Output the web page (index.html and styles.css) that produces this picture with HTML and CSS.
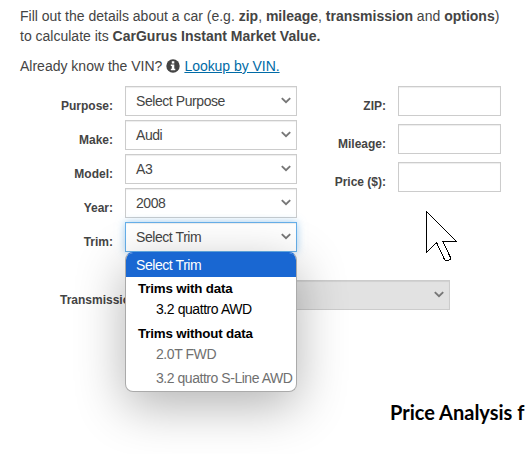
FILE: index.html
```html
<!DOCTYPE html>
<html lang="en">
<head>
<meta charset="utf-8">
<title>Instant Market Value</title>
<link rel="stylesheet" href="styles.css">
</head>
<body>
<svg class="defs" width="0" height="0"><symbol id="chevron" viewBox="0 0 10 7"><path d="M.8 1.1 5 5.1 9.2 1.1" fill="none" stroke="#777" stroke-width="1.9"/></symbol></svg>
<main class="page">
  <p class="intro"><span class="line first">Fill out the details about a car (e.g. <b>zip</b>, <b>mileage</b>, <b>transmission</b> and <b>options</b>)</span><br><span class="line second">to calculate its <b>CarGurus Instant Market Value.</b></span></p>
  <p class="vin"><span class="question">Already know the VIN?</span><svg class="info" viewBox="0 0 14 14"><circle cx="7" cy="7" r="6.7" fill="#444"/><path d="M5.8 2.3h2.5v2.1H5.8zM4.8 5.5h3.5v4.2h1v1.6H4.8V9.7h1V7h-1z" fill="#fff"/></svg><a href="#">Lookup by VIN.</a></p>
  <form class="form">
    <div class="column">
      <div class="row"><label>Purpose:</label><div class="select"><span>Select Purpose</span><svg class="chevron"><use href="#chevron"/></svg></div></div>
      <div class="row"><label>Make:</label><div class="select"><span>Audi</span><svg class="chevron"><use href="#chevron"/></svg></div></div>
      <div class="row"><label>Model:</label><div class="select"><span>A3</span><svg class="chevron"><use href="#chevron"/></svg></div></div>
      <div class="row"><label>Year:</label><div class="select"><span>2008</span><svg class="chevron"><use href="#chevron"/></svg></div></div>
      <div class="row"><label>Trim:</label><div class="select focus"><span>Select Trim</span><svg class="chevron"><use href="#chevron"/></svg>
        <div class="menu">
          <div class="option selected">Select Trim</div>
          <div class="group">Trims with data</div>
          <div class="option nested available">3.2 quattro AWD</div>
          <div class="group second">Trims without data</div>
          <div class="option nested muted">2.0T FWD</div>
          <div class="option nested muted last">3.2 quattro S-Line AWD</div>
        </div>
      </div></div>
    </div>
    <div class="column inputs">
      <div class="row"><label>ZIP:</label><input type="text"></div>
      <div class="row"><label>Mileage:</label><input type="text"></div>
      <div class="row"><label>Price ($):</label><input type="text"></div>
    </div>
  </form>
  <div class="row transmission"><label>Transmission:</label><div class="select disabled"><svg class="chevron"><use href="#chevron"/></svg></div></div>
  <h2>Price Analysis f</h2>
</main>
<svg class="cursor" width="32" height="51" viewBox="0 0 32 51" shape-rendering="crispEdges"><path d="M.5.5V41.5L10.5 31.5 18 47.5Q19 49.5 21 49.5Q25.5 49.5 24 45.5L17 30.5H30.5Z" fill="#fff" stroke="#000"/></svg>
</body>
</html>
```
FILE: styles.css
```css
* { box-sizing: border-box; }
body {
  margin: 0;
  width: 525px;
  height: 454px;
  overflow: hidden;
  position: relative;
  background: #fff;
  color: #444;
  font: 14px/20px "Liberation Sans", Arial, sans-serif;
}
.defs { position: absolute; }
.page { padding: 6px 0 0 20px; white-space: nowrap; }
.intro { margin: 0; }
.vin { margin: 10px 0 0; display: flex; align-items: center; }
.info { width: 14px; height: 14px; margin: 0 4px; flex: none; }
a { color: #006ba6; text-decoration: underline; letter-spacing: -.04px; }
.form { display: flex; margin-top: 10px; }
.column { width: 277px; display: flex; flex-direction: column; gap: 4px; }
.row { display: flex; height: 30px; }
label {
  width: 93px;
  margin-right: 12px;
  padding-top: 10px;
  text-align: right;
  font-size: 12px;
  font-weight: bold;
}
.select {
  position: relative;
  width: 172px;
  height: 30px;
  padding: 0 5px 0 10px;
  display: flex;
  align-items: center;
  justify-content: space-between;
  border: 1px solid #ccc;
  background: #fff;
  font-size: 14px;
  letter-spacing: -.43px;
  box-shadow: inset 0 1px 1px rgba(0, 0, 0, .075);
}
.chevron { width: 10px; height: 7px; margin-bottom: 1px; flex: none; }
.focus {
  border-color: #66afe9;
  box-shadow: inset 0 1px 1px rgba(0, 0, 0, .075), 0 0 8px rgba(102, 175, 233, .6);
}
.inputs { width: 204px; gap: 8px; }
.inputs label { width: 89px; }
input {
  width: 103px;
  height: 30px;
  border: 1px solid #ccc;
  border-radius: 0;
  box-shadow: inset 0 1px 1px rgba(0, 0, 0, .075);
}
.transmission { margin-top: 28px; padding-left: 40px; }
.transmission label { width: 80px; }
.disabled { width: 298px; background: #e2e2e2; justify-content: flex-end; }
.menu {
  position: absolute;
  z-index: 2;
  top: 29px;
  left: -1px;
  width: 172px;
  height: 140px;
  border: 1px solid #aaa;
  border-top-color: #1967d2;
  border-radius: 8px;
  overflow: hidden;
  background: #fff;
  color: #000;
  box-shadow: 0 14px 50px rgba(0, 0, 0, .3);
}
.option { padding-left: 10px; }
.option.selected { height: 24px; line-height: 24px; background: #1967d2; color: #fff; }
.group { height: 22px; line-height: 24px; padding-left: 12px; font-weight: bold; font-size: 13.33px; letter-spacing: -.16px; }
.group.second { height: 24px; padding-top: 3px; }
.option.nested { height: 22px; line-height: 22px; padding-left: 30px; }
.option.nested.available { height: 20px; line-height: 20px; }
.option.muted { color: #707070; }
.option.nested.last { height: 26px; line-height: 26px; letter-spacing: -.46px; }
h2 {
  margin: 88px 0 0 370px;
  color: #000;
  font: bold 20px/28px Lato, sans-serif;
}
.cursor { position: absolute; left: 426px; top: 211px; z-index: 3; }
```
